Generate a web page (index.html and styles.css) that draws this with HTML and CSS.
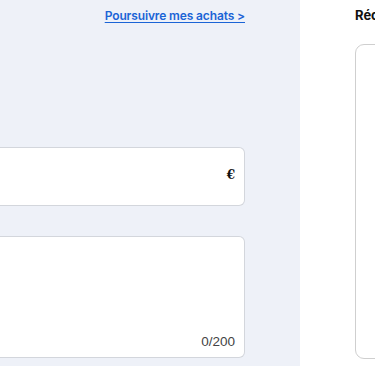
FILE: index.html
```html
<!DOCTYPE html>
<html lang="fr">
<head>
  <meta charset="UTF-8">
  <title>Panier</title>
  <link rel="stylesheet" href="styles.css">
</head>
<body>
<div class="page">
  <div class="cart">
    <div class="cart-head">
      <a href="#" class="continue">Poursuivre mes achats &gt;</a>
    </div>
    <div class="field amount">
      <input type="text" value="">
      <span class="unit">€</span>
    </div>
    <div class="field message">
      <textarea maxlength="200"></textarea>
      <span class="count">0/200</span>
    </div>
  </div>
  <div class="summary">
    <h2>Récapitulatif</h2>
    <div class="summary-card"></div>
  </div>
</div>
</body>
</html>
```

FILE: styles.css
```css
* {
  margin: 0;
  padding: 0;
  box-sizing: border-box;
}

body {
  font-family: Inter, "Liberation Sans", sans-serif;
  color: #111;
  overflow: hidden;
}

.page {
  display: flex;
  height: 366px;
}

.cart {
  width: 300px;
  flex: none;
  background-color: #eef1f8;
  padding: 8px 55px 0 0;
}

.cart-head {
  display: flex;
  justify-content: flex-end;
  height: 16px;
}

.continue {
  font-size: 12px;
  font-weight: 600;
  line-height: 16px;
  letter-spacing: -0.13px;
  color: #1a64d6;
  text-decoration: underline;
  text-underline-offset: 2px;
}

.field {
  position: relative;
  background-color: #fff;
  border: 1px solid #d3d6dc;
  border-left: none;
  border-radius: 0 6px 6px 0;
}

.field input,
.field textarea {
  width: 100%;
  border: none;
  outline: none;
  background: transparent;
  font: inherit;
  resize: none;
}

.amount {
  margin-top: 123px;
  height: 59px;
}

.amount input {
  height: 57px;
}

.unit {
  position: absolute;
  right: 9px;
  top: 20px;
  font-family: "DejaVu Serif", serif;
  font-size: 12px;
  font-weight: bold;
}

.message {
  margin-top: 30px;
  height: 122px;
}

.message textarea {
  height: 120px;
}

.count {
  position: absolute;
  right: 9px;
  bottom: 8px;
  font-family: "Liberation Sans", Arial, sans-serif;
  font-size: 13.5px;
  color: #444;
}

.summary {
  padding: 7px 0 0 55px;
  flex: 1;
  min-width: 0;
  overflow: hidden;
}

.summary h2 {
  font-size: 13px;
  font-weight: 700;
  line-height: 16px;
  white-space: nowrap;
}

.summary-card {
  margin-top: 21px;
  width: 260px;
  height: 315px;
  border: 1px solid #cfcfcf;
  border-radius: 9px;
}
```
